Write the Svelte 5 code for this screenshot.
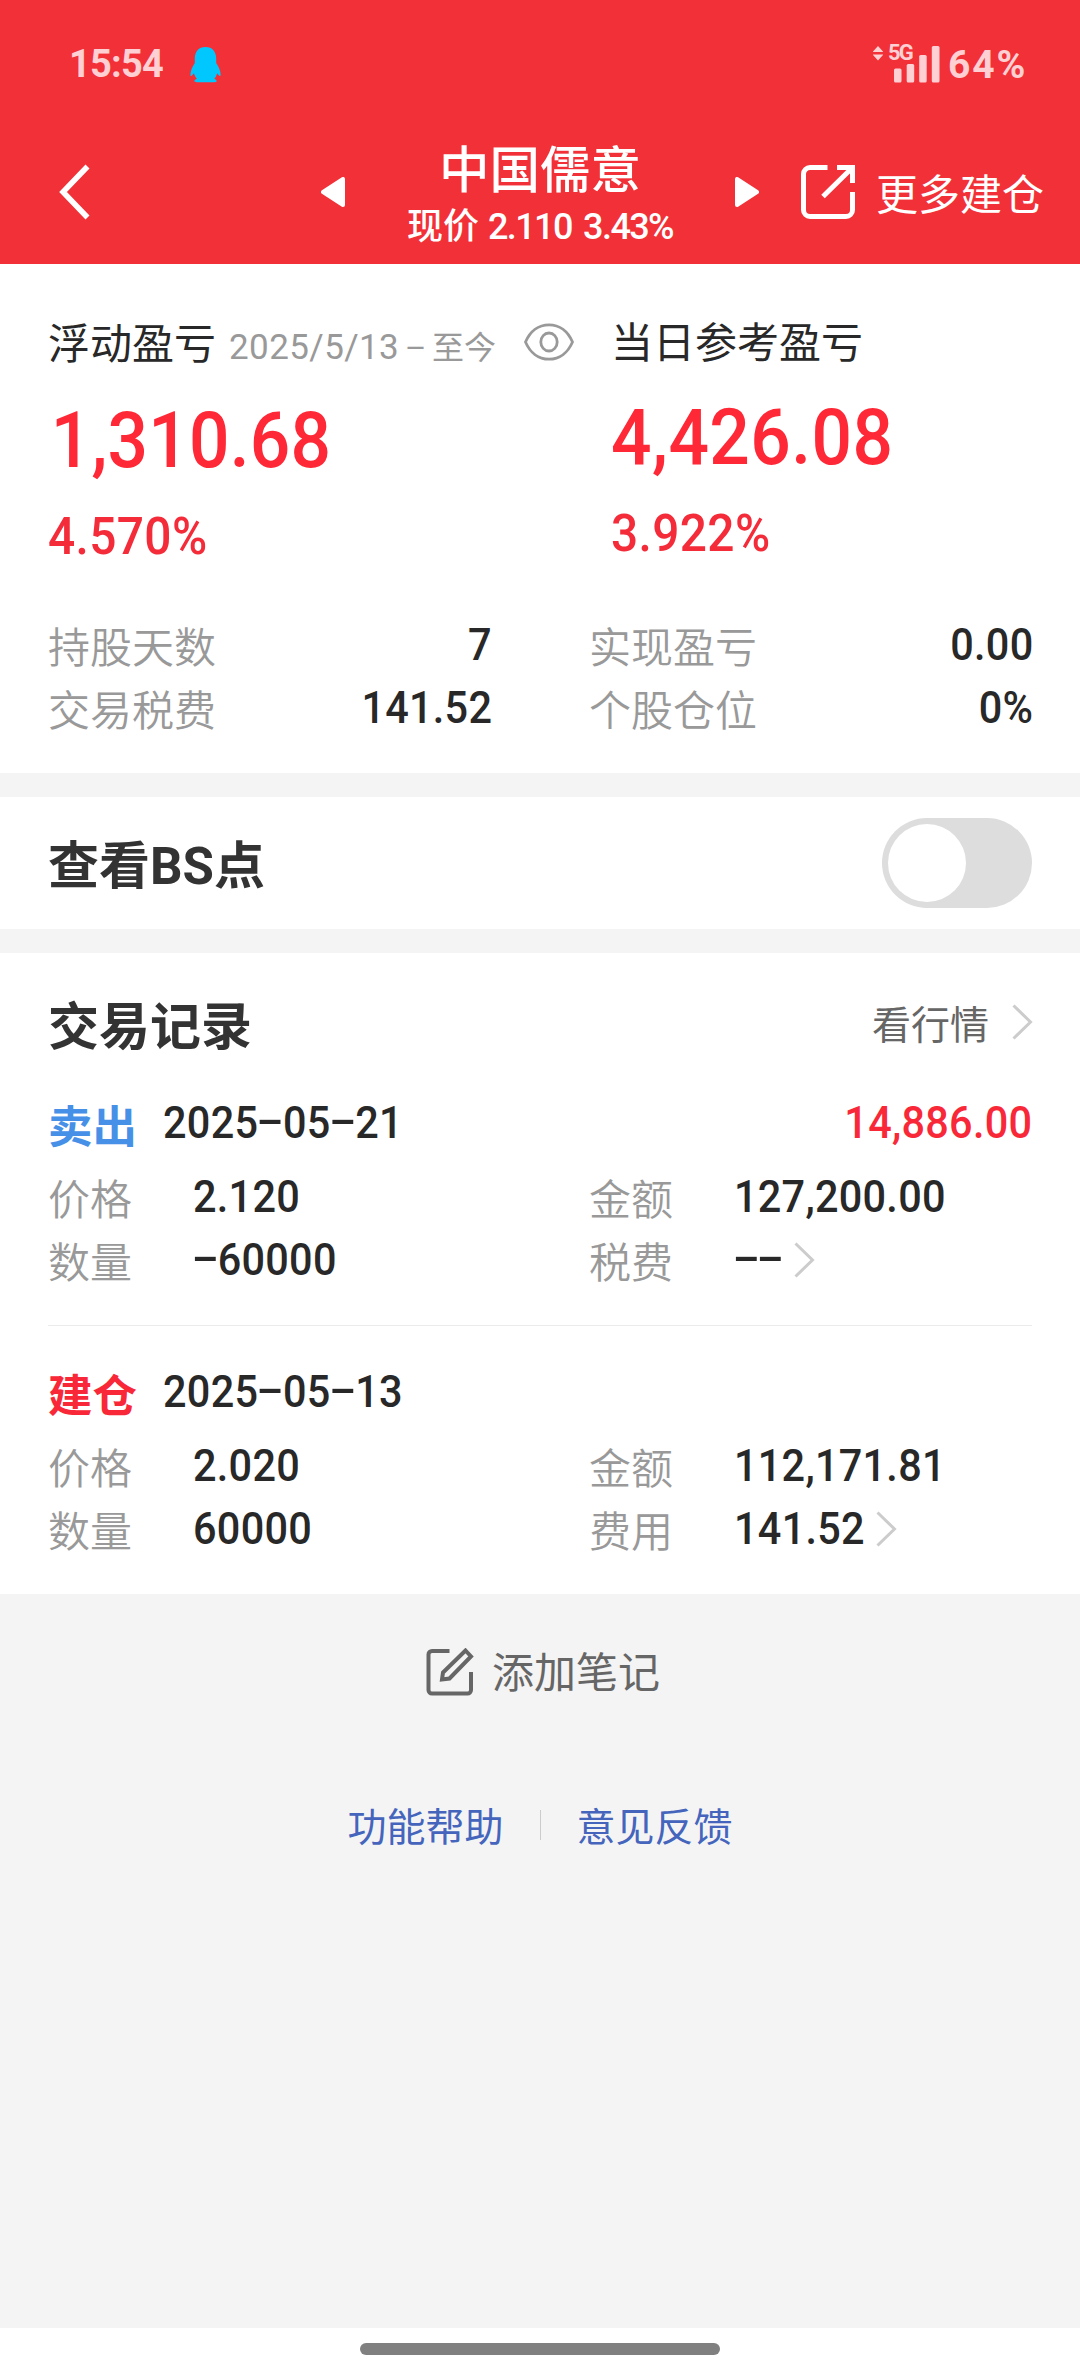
<script>
  const stats = [
    [{ label: '持股天数', value: '7' }, { label: '实现盈亏', value: '0.00' }],
    [{ label: '交易税费', value: '141.52' }, { label: '个股仓位', value: '0%' }]
  ];

  const records = [
    {
      tag: '卖出', kind: 'sell', date: '2025-05-21', profit: '14,886.00',
      price: '2.120', amount: '127,200.00', count: '-60000', feeLabel: '税费', fee: '--'
    },
    {
      tag: '建仓', kind: 'build', date: '2025-05-13', profit: '',
      price: '2.020', amount: '112,171.81', count: '60000', feeLabel: '费用', fee: '141.52'
    }
  ];

  let showPoints = $state(false);
</script>

{#snippet num(text)}{#each text.split('') as ch}{#if ch === '-'}<span class="dash">-</span>{:else}{ch}{/if}{/each}{/snippet}

{#snippet chevron()}
  <svg class="chevron" width="22" height="36" viewBox="0 0 22 36"><path d="M1.5 1.5 18.5 18 1.5 34.5" /></svg>
{/snippet}

<div class="page">
  <header>
    <div class="status">
      <span class="time">15:54</span>
      <svg class="penguin" width="31" height="36" viewBox="0 0 31 36">
        <path d="M15.5 0C8.5 0 4.8 4.8 4.8 11.5V16C2.5 19.5.4 24 .4 27.5c0 1.8.9 2 1.8.8L4 26.2c.6 2.3 1.7 4.2 3 5.6-1.6.5-2.6 1.3-2.6 2.3 0 .8.8 1.2 2.200 1.200H24.600c1.400 0 2-.4 2-1.200 0-1-1-1.800-2.400-2.300 1.300-1.400 2.300-3.300 2.900-5.600l1.700 2.100c.9 1.200 1.800 1 1.800-.8 0-3.500-2-8-4.400-11.500V11.500C26.200 4.800 22.500 0 15.500 0Z" />
      </svg>
      <svg class="arrows" width="10" height="15" viewBox="0 0 10 15"><path d="M5 0 10 5.500V6H0V5.500ZM0 8.500H10V9L5 14.500 0 9Z" /></svg>
      <span class="network">5G</span>
      <svg class="bars" width="46" height="37" viewBox="0 0 46 37">
        <rect x="0" y="22.500" width="7.500" height="14" rx="1.500" /><rect x="12.700" y="18" width="7.500" height="18.500" rx="1.500" />
        <rect x="25.200" y="9" width="7.500" height="27.500" rx="1.500" /><rect x="37.800" y="0" width="7.700" height="36.500" rx="1.500" />
      </svg>
      <span class="battery">64%</span>
    </div>
    <nav>
      <svg class="back" width="32" height="56" viewBox="0 0 32 56"><path d="M28.500 2.500 4 28 28.500 53.500" /></svg>
      <svg class="tri prev" width="24" height="30" viewBox="0 0 24 30"><path d="M22 2V28L2 15Z" /></svg>
      <div class="title">
        <h1>中国儒意</h1>
        <p>现价 <span>2.110 3.43%</span></p>
      </div>
      <svg class="tri next" width="24" height="30" viewBox="0 0 24 30"><path d="M2 2V28L22 15Z" /></svg>
      <svg class="open" width="54" height="54" viewBox="0 0 54 54">
        <path d="M26.500 2.500H9A6.500 6.500 0 0 0 2.500 9V45A6.500 6.500 0 0 0 9 51.500H45A6.500 6.500 0 0 0 51.500 45V27M36 2.500H51.500V18M51.500 2.500 22 31.500" />
      </svg>
      <span class="more">更多建仓</span>
    </nav>
  </header>

  <section class="summary">
    <div class="totals">
      <div class="total float">
        <div class="caption">
          <span>浮动盈亏</span>
          <span class="range"><span class="day">2025/5/13</span><span class="to">-</span>至今</span>
          <svg class="eye" width="50" height="38" viewBox="0 0 50 38">
            <path d="M1.500 19C6 8.500 14.500 1.800 25 1.800S44 8.500 48.500 19C44 29.500 35.500 36.200 25 36.200S6 29.500 1.500 19Z" /><ellipse cx="25" cy="19" rx="8.200" ry="9" />
          </svg>
        </div>
        <div class="big">1,310.68</div>
        <div class="rate">4.570%</div>
      </div>
      <div class="total today">
        <div class="caption">当日参考盈亏</div>
        <div class="big">4,426.08</div>
        <div class="rate">3.922%</div>
      </div>
    </div>
    {#each stats as row}
      <div class="stats">
        {#each row as s}
          <div class="stat"><span class="label">{s.label}</span><span class="value end">{s.value}</span></div>
        {/each}
      </div>
    {/each}
  </section>

  <section class="points">
    <h2>查看BS点</h2>
    <button class="toggle" class:on={showPoints} aria-label="查看BS点" onclick={() => (showPoints = !showPoints)}><i></i></button>
  </section>

  <section class="records">
    <div class="records-head">
      <h2>交易记录</h2>
      <span class="quote">看行情</span>
      {@render chevron()}
    </div>
    {#each records as r}
      <article>
        <div class="row-head">
          <span class="tag {r.kind}">{r.tag}</span>
          <span class="value">{@render num(r.date)}</span>
          <span class="value end profit">{r.profit}</span>
        </div>
        <div class="detail">
          <span class="label">价格</span><span class="value">{r.price}</span>
          <span class="label">金额</span><span class="value">{r.amount}</span>
          <span class="label">数量</span><span class="value">{@render num(r.count)}</span>
          <span class="label">{r.feeLabel}</span>
          <span class="fee" class:empty={r.fee === '--'}><span class="value">{@render num(r.fee)}</span>{@render chevron()}</span>
        </div>
      </article>
    {/each}
  </section>

  <div class="note">
    <svg width="48" height="48" viewBox="0 0 48 48">
      <path d="M23.500 3H6A3.500 3.500 0 0 0 2.500 6.500V42A3.500 3.500 0 0 0 6 45.500H41.500A3.500 3.500 0 0 0 45 42V24" />
      <path d="M39.500 2.500 45 8.500 23.500 30.500 16 31.500 17 24.500Z" />
    </svg>
    <span>添加笔记</span>
  </div>
  <div class="links"><span>功能帮助</span><i></i><span>意见反馈</span></div>

  <footer><div></div></footer>
</div>

<style>
  :global(body) { margin: 0; background: #f4f4f4; }
  .page {
    width: 1080px;
    height: 2376px;
    display: flex;
    flex-direction: column;
    background: #f4f4f4;
    color: #282828;
    font: 400 42px/60px Roboto, 'Noto Sans CJK SC', sans-serif;
    white-space: nowrap;
    overflow: hidden;
  }
  h1, h2, p { margin: 0; }
  svg { display: block; flex: none; fill: none; }

  header { height: 264px; background: #f23038; color: #fff; }
  .status { height: 128px; display: flex; align-items: center; color: #ffd0d3; }
  .time { width: 121px; padding-left: 69px; font-size: 38px; font-weight: 700; letter-spacing: -0.8px; }
  .penguin { margin-top: 2px; fill: #00c8ff; }
  .arrows { margin: 0 5px 22px 652px; fill: #ffd0d3; }
  .network { width: 0; margin-bottom: 22px; font-size: 22px; font-weight: 700; letter-spacing: -1.8px; }
  .bars { margin-left: 6px; fill: #ffd0d3; }
  .battery { padding: 2px 0 0 8px; font-size: 39px; font-weight: 700; letter-spacing: 1.9px; }

  nav { height: 128px; display: flex; align-items: center; }
  .back { margin-left: 59px; stroke: #fff; stroke-width: 5.5; }
  .tri { fill: #fff; stroke: #fff; stroke-width: 4; stroke-linejoin: round; }
  .prev { margin-left: 230px; }
  .next { margin-right: 42px; }
  .title { width: 390px; padding-top: 7px; text-align: center; }
  h1 { font-size: 50.500px; font-weight: 500; line-height: 62px; }
  p { font-size: 36px; font-weight: 500; line-height: 50px; }
  p span { letter-spacing: -1.6px; word-spacing: 4px; }
  .open { stroke: #fff; stroke-width: 5; }
  .more { margin: 7px 0 0 21px; }

  .summary { height: 509px; background: #fff; }
  .totals { display: flex; height: 353px; }
  .total { display: flex; flex-direction: column; align-items: flex-start; }
  .float { width: 563px; padding: 51px 0 0 48px; }
  .today { padding-top: 50px; }
  .caption { display: flex; align-items: center; height: 60px; }
  .range { width: 266px; margin: 6px 29px 0 13px; color: #999; display: flex; align-items: center; font-size: 32px; }
  .day { font-size: 35px; letter-spacing: 0.4px; }
  .to { margin: 0 12px; transform: translateY(-2px) scaleX(2.1); }
  .eye { margin-bottom: 6px; stroke: #999; stroke-width: 2.8; }
  .big { height: 90px; margin-top: 21px; color: #ff2836; font-size: 77.5px; font-weight: 500; line-height: 90px; letter-spacing: 0.5px; transform: scaleX(0.92); transform-origin: left; }
  .float .big { padding-left: 3px; letter-spacing: 0.2px; }
  .rate { margin-top: 21px; color: #f42c3a; font-size: 52px; font-weight: 500; letter-spacing: 0.4px; transform: scaleX(0.92); transform-origin: left; }
  .today .big { margin-top: 19px; }

  .stats { display: flex; gap: 98px; height: 63px; padding: 0 48px; }
  .stat { width: 443px; display: flex; align-items: center; justify-content: space-between; }
  .label { color: #999; font-weight: 350; }
  .value { padding-bottom: 8px; font-size: 45px; font-weight: 500; letter-spacing: 0.3px; transform: scaleX(0.92); transform-origin: left; }
  .end { transform-origin: right; }
  .stat .end { margin-right: -1px; }
  .dash { display: inline-block; margin: 0 6px 0 5.500px; letter-spacing: 0; transform: translateY(-3px) scaleX(1.95); }

  .points { height: 132px; margin-top: 24px; padding: 0 48px; display: flex; align-items: center; justify-content: space-between; background: #fff; }
  h2 { padding-top: 8px; color: #333; font-size: 51px; font-weight: 700; }
  .toggle { width: 150px; height: 90px; padding: 6px; border: 0; border-radius: 45px; background: #ddd; }
  .toggle i { display: block; width: 78px; height: 78px; border-radius: 50%; background: #fff; }
  .toggle.on { background: #f23038; }
  .toggle.on i { margin-left: auto; }

  .records { height: 641px; margin-top: 24px; background: #fff; }
  .records-head { height: 66px; padding: 38px 48px 0; display: flex; align-items: center; }
  .quote { margin: 0 23px 0 auto; padding-top: 3px; color: #666; font-size: 39px; }
  .chevron { stroke: #ccc; stroke-width: 3; }
  .records-head .chevron { margin: 0 -2px 4px 0; }
  article { margin: 0 48px; padding: 38px 0 30px; }
  article + article { border-top: 1px solid #ebebeb; }
  .row-head { height: 66px; display: flex; align-items: center; }
  .tag { width: 115px; font-size: 44.500px; font-weight: 700; }
  .sell { color: #4790e8; }
  .build, .profit { color: #f92838; }
  .profit { margin-left: auto; }
  .row-head .value { padding-bottom: 10px; }
  .detail { margin-top: 8px; display: grid; grid-template: 63px 63px / 145px 396px 145px 1fr; align-items: center; }
  .detail .value { justify-self: start; }
  .fee { display: flex; align-items: center; gap: 0; }
  .fee.empty { gap: 6px; }
  .fee .chevron { margin-bottom: 7px; }

  .note { height: 60px; margin-top: 48px; display: flex; align-items: center; justify-content: center; gap: 18px; padding-left: 6px; color: #666; }
  .note span { padding-top: 3px; }
  .note svg { stroke: #666; stroke-width: 4; }
  .links { height: 60px; margin-top: 96px; display: flex; align-items: center; justify-content: center; gap: 36px; color: #4565bd; font-size: 39px; }
  .links i { width: 1px; height: 30px; margin-bottom: 6px; background: #ccc; }

  footer { height: 33px; margin-top: auto; padding-top: 15px; background: #fff; }
  footer div { width: 360px; height: 12px; margin: 0 auto; border-radius: 6px; background: #808080; }
</style>
